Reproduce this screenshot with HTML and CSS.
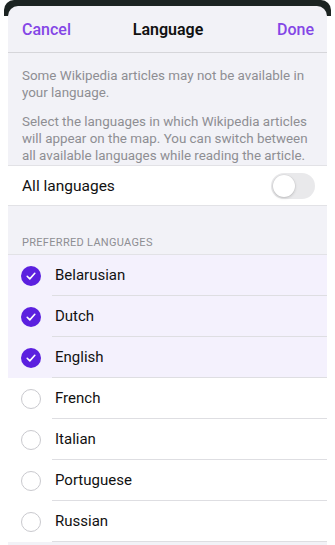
FILE: index.html
```html
<!DOCTYPE html>
<html lang="en">
<head>
<meta charset="utf-8">
<title>Language</title>
<link rel="stylesheet" href="styles.css">
</head>
<body>
<div class="backdrop"></div>
<div class="sheet">
  <header class="nav">
    <span class="nav-btn left">Cancel</span>
    <span class="nav-title">Language</span>
    <span class="nav-btn right">Done</span>
  </header>
  <div class="info">
    <p>Some Wikipedia articles may not be available in your language.</p>
    <p>Select the languages in which Wikipedia articles will appear on the map. You can switch between all available languages while reading the article.</p>
  </div>
  <div class="toggle-row">
    <span class="row-label">All languages</span>
    <span class="switch"><span class="knob"></span></span>
  </div>
  <div class="section-title">PREFERRED LANGUAGES</div>
  <ul class="list">
    <li class="item selected"><span class="check"><svg viewBox="0 0 20 20" width="20" height="20"><circle cx="10" cy="10" r="10" fill="#5b20df"/><path d="M6.2 10.3l2.6 2.6 5-5.6" fill="none" stroke="#fff" stroke-width="1.6" stroke-linecap="round" stroke-linejoin="round"/></svg></span><span class="name">Belarusian</span></li>
    <li class="item selected"><span class="check"><svg viewBox="0 0 20 20" width="20" height="20"><circle cx="10" cy="10" r="10" fill="#5b20df"/><path d="M6.2 10.3l2.6 2.6 5-5.6" fill="none" stroke="#fff" stroke-width="1.6" stroke-linecap="round" stroke-linejoin="round"/></svg></span><span class="name">Dutch</span></li>
    <li class="item selected"><span class="check"><svg viewBox="0 0 20 20" width="20" height="20"><circle cx="10" cy="10" r="10" fill="#5b20df"/><path d="M6.2 10.3l2.6 2.6 5-5.6" fill="none" stroke="#fff" stroke-width="1.6" stroke-linecap="round" stroke-linejoin="round"/></svg></span><span class="name">English</span></li>
    <li class="item"><span class="check"><span class="ring"></span></span><span class="name">French</span></li>
    <li class="item"><span class="check"><span class="ring"></span></span><span class="name">Italian</span></li>
    <li class="item"><span class="check"><span class="ring"></span></span><span class="name">Portuguese</span></li>
    <li class="item"><span class="check"><span class="ring"></span></span><span class="name">Russian</span></li>
  </ul>
</div>
</body>
</html>
```

FILE: styles.css
```css
* { box-sizing: border-box; }
html, body { margin: 0; padding: 0; background: #fff; }
body {
  font-family: Roboto, "Liberation Sans", sans-serif;
  color: #111;
  width: 335px;
  height: 545px;
  overflow: hidden;
}
.backdrop {
  height: 16px;
  margin: 0 4px;
  background: #1c2422;
  border-radius: 10px 10px 0 0;
}
.sheet {
  margin: -10px 8px 0;
  background: #f2f2f7;
  border-radius: 10px 10px 0 0;
  height: 560px;
  overflow: hidden;
}
.nav {
  height: 47px;
  display: grid;
  grid-template-columns: 1fr auto 1fr;
  align-items: center;
  padding: 1px 13px 0 14px;
  border-bottom: 1px solid #d6d6da;
}
.nav-btn {
  color: #8446e6;
  font-size: 16px;
  font-weight: 500;
}
.nav-btn.right { justify-self: end; }
.nav-title {
  font-size: 16px;
  font-weight: 600;
  color: #111;
}
.info {
  padding: 14px 14px 1px;
  color: #8e8e93;
  font-size: 13.4px;
  line-height: 17px;
}
.info p { margin: 0 0 12px; }
.info p:last-child { margin-bottom: 0; }
.toggle-row {
  height: 41px;
  background: #fff;
  display: flex;
  align-items: center;
  justify-content: space-between;
  padding: 0 12px 0 14px;
  border-top: 1px solid #e2e2e6;
  border-bottom: 1px solid #e2e2e6;
}
.row-label { font-size: 15.5px; }
.switch {
  width: 44px;
  height: 26px;
  border-radius: 13px;
  background: #e9e9eb;
  display: flex;
  align-items: center;
  padding: 2px;
}
.knob {
  width: 22px;
  height: 22px;
  border-radius: 50%;
  background: #fff;
  box-shadow: 0 1px 3px rgba(0,0,0,0.18), 0 0 0 0.5px rgba(0,0,0,0.05);
}
.section-title {
  padding: 30px 14px 5px;
  font-size: 11px;
  color: #8e8e93;
  letter-spacing: 0.3px;
  border-bottom: 1px solid #e2e2e6;
}
.list { list-style: none; margin: 0; padding: 0; }
.item {
  height: 41px;
  display: flex;
  align-items: center;
  background: #fff;
  padding-left: 13px;
}
.item.selected { background: #f4f1fd; }
.check {
  width: 20px;
  height: 20px;
  display: flex;
  align-items: center;
  justify-content: center;
  flex: none;
}
.check svg { display: block; }
.ring {
  width: 20px;
  height: 20px;
  border-radius: 50%;
  border: 1px solid #c9c9ce;
}
.name {
  flex: 1;
  align-self: stretch;
  display: flex;
  align-items: center;
  margin-left: 11px;
  padding-left: 3px;
  font-size: 15px;
  border-bottom: 1px solid #dedee2;
}
```
